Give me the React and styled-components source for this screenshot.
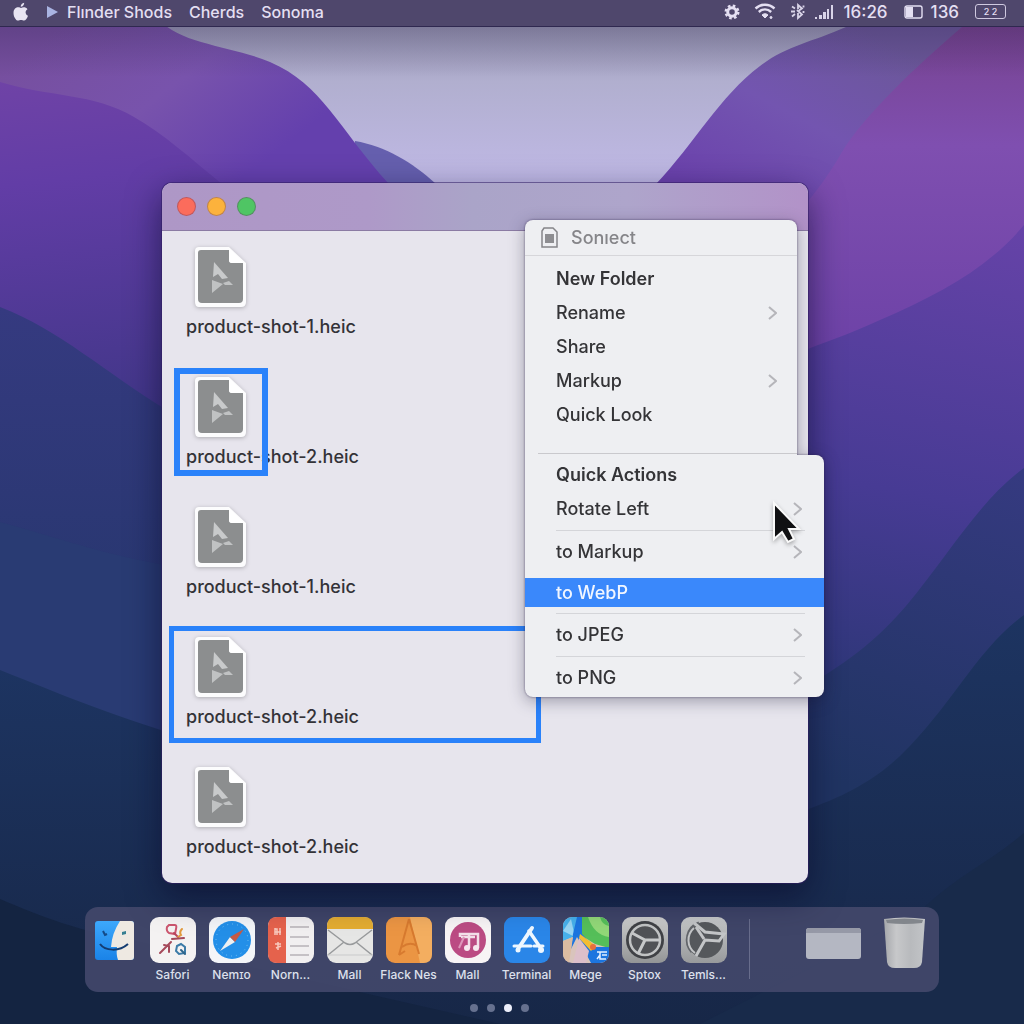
import React, { useState } from "react";
import styled, { createGlobalStyle } from "styled-components";

const GlobalStyle = createGlobalStyle`
  * {
    box-sizing: border-box;
  }

  body {
    margin: 0;
    font-family: Inter, "Liberation Sans", sans-serif;
    background: #14213f;
  }

  button {
    font-family: inherit;
    border: none;
    background: none;
    padding: 0;
    margin: 0;
  }
`;

const Desktop = styled.div`
  position: relative;
  min-height: 100vh;
  display: flex;
  flex-direction: column;
  overflow: hidden;
  isolation: isolate;
`;

/* Wallpaper sits behind everything on the desktop */
const WallpaperArt = styled.svg`
  position: absolute;
  inset: 0;
  width: 100%;
  height: 100%;
  z-index: -1;
`;

const MenuBar = styled.header`
  display: flex;
  justify-content: space-between;
  align-items: center;
  height: 27px;
  padding: 0 18px 3px 12px;
  background: #4f476c;
  border-bottom: 1px solid #2f2850;
  color: #e4dff2;
`;

const MenuGroup = styled.nav`
  display: flex;
  align-items: center;
  gap: 17px;
`;

const StatusGroup = styled.div`
  display: flex;
  align-items: center;
  gap: 10px;
  font-size: 17px;
  font-weight: 500;
  line-height: 20px;
`;

const StatusIcons = styled.span`
  display: flex;
  align-items: center;
  gap: 14px;
`;

const BatteryStatus = styled.span`
  display: flex;
  align-items: center;
  gap: 8px;
  margin: 0 6px;
`;

const MenuButton = styled.button`
  display: flex;
  align-items: center;
  gap: 9px;
  color: inherit;
  font-size: 16px;
  font-weight: 500;
  line-height: 20px;
  white-space: nowrap;
`;

const InputBadge = styled.span`
  width: 31px;
  height: 15px;
  border: 1px solid #cfc9e0;
  border-radius: 3px;
  font-size: 9px;
  line-height: 13px;
  text-align: center;
`;

const Workspace = styled.main`
  flex: 1;
  padding: 156px 216px 24px 162px;
`;

const Window = styled.section`
  position: relative;
  border-radius: 10px;
  background: #e7e5ed;
  box-shadow: 0 0 0 1px rgba(50, 30, 100, 0.55), 0 12px 34px rgba(8, 8, 40, 0.6);
`;

const TitleBar = styled.div`
  display: flex;
  align-items: center;
  gap: 11px;
  height: 48px;
  padding: 0 15px;
  border-radius: 10px 10px 0 0;
  border-bottom: 1px solid #8b7ba3;
  background: linear-gradient(
    90deg,
    #ae97c6 0%,
    #ae99c8 32%,
    #aaa4c8 48%,
    #aea5cb 72%,
    #b292c8 100%
  );
`;

const TrafficLight = styled.button`
  width: 19px;
  height: 19px;
  border-radius: 50%;
  border: 1px solid rgba(90, 50, 90, 0.35);
  background: ${(props) => props.$color};
`;

const FileList = styled.ul`
  list-style: none;
  margin: 0;
  padding: 15px 0 0;
`;

const FileItem = styled.li`
  position: relative;
  height: 130px;
  padding: 0 24px;

  &:last-child {
    height: 117px;
  }
`;

const FileButton = styled.button`
  display: flex;
  flex-direction: column;
  align-items: flex-start;
  gap: 7px;
  color: #343338;
  font-size: 18px;
  font-weight: 500;
  line-height: 24px;

  svg {
    display: block;
    margin-left: 8px;
    filter: drop-shadow(0 1px 2px rgba(0, 0, 0, 0.25));
  }
`;

/* Drag-selection frame drawn over a file */
const Selection = styled.span`
  position: absolute;
  top: ${(props) => (props.$wide ? "-10px" : "-8px")};
  left: ${(props) => (props.$wide ? "7px" : "12px")};
  width: ${(props) => (props.$wide ? "372px" : "94px")};
  height: ${(props) => (props.$wide ? "117px" : "108px")};
  border: ${(props) => (props.$wide ? "5px" : "6px")} solid #2a82fa;
  pointer-events: none;
`;

const ContextMenu = styled.div`
  position: absolute;
  top: 37px;
  right: -16px;
  width: 299px;
  filter: drop-shadow(0 0 1px rgba(40, 30, 70, 0.6))
    drop-shadow(0 4px 8px rgba(20, 20, 50, 0.35));
`;

const MainPanel = styled.div`
  width: 272px;
  height: 235px;
  border-radius: 8px 8px 0 0;
  background: #eeeff2;
`;

const ActionsPanel = styled.div`
  padding: 3px 0 2px;
  border-radius: 0 8px 8px 8px;
  background: #eeeff2;
`;

const MenuHeader = styled.div`
  display: flex;
  align-items: center;
  gap: 13px;
  height: 36px;
  margin-bottom: 6px;
  padding: 0 16px;
  border-bottom: 1px solid #d6d6da;
  color: #858589;
  font-size: 18px;
  font-weight: 500;
`;

const Row = styled.button`
  display: flex;
  justify-content: space-between;
  align-items: center;
  width: 100%;
  height: ${(props) => (props.$active ? "29px" : "34px")};
  margin: ${(props) => (props.$active ? "9px 0 6px" : "0")};
  padding: 0 ${(props) => (props.$inset ? "22px" : "20px")} 0 31px;
  background: ${(props) => (props.$active ? "#3a88fb" : "transparent")};
  color: ${(props) => (props.$active ? "#f1f6ff" : "#343437")};
  font-size: 18px;
  font-weight: ${(props) => (props.$strong ? 600 : 500)};
  line-height: 24px;
  text-align: left;
`;

const Divider = styled.hr`
  height: 1px;
  margin: ${(props) => (props.$section ? "21px 0 0 13px" : "4px 19px 4px 31px")};
  border: none;
  background: ${(props) => (props.$section ? "#c9c9cd" : "#d4d5d9")};
`;

const Pointer = styled.svg`
  position: absolute;
  top: 279px;
  left: 245px;
  filter: drop-shadow(0 2px 2px rgba(0, 0, 0, 0.3));
`;

const DockArea = styled.footer`
  display: flex;
  flex-direction: column;
  align-items: center;
  gap: 12px;
  padding: 0 85px 12px;
`;

const Dock = styled.nav`
  display: flex;
  width: 100%;
  height: 85px;
  padding: 10px 14px 0 0;
  border-radius: 13px;
  background: rgba(68, 73, 108, 0.88);
`;

const DockItem = styled.button`
  display: flex;
  flex-direction: column;
  align-items: center;
  gap: 4px;
  flex: 0 0 59px;
  color: #dde0ec;
  font-size: 12px;
  font-weight: 500;
  line-height: 16px;
  white-space: nowrap;

  &:first-child {
    flex-basis: 58px;
  }

  svg {
    display: block;
    flex: none;
  }
`;

const DockSeparator = styled.span`
  width: 1px;
  height: 60px;
  margin: 2px auto 0 16px;
  background: #686d8c;
`;

const DockExtras = styled.div`
  display: flex;
  gap: 23px;
  align-items: flex-start;
`;

const PageDots = styled.div`
  display: flex;
  gap: 9px;
  padding-right: 26px;
`;

const Dot = styled.button`
  width: 8px;
  height: 8px;
  border-radius: 50%;
  background: ${(props) => (props.$current ? "#eceefa" : "#66718f")};
`;

const Wallpaper = () => (
  <WallpaperArt viewBox="0 0 1024 1024" preserveAspectRatio="none" aria-hidden="true">
    <defs>
      <linearGradient id="sky" x1="0" y1="0" x2="0" y2="1">
        <stop offset="0.02" stopColor="#9592b0" />
        <stop offset="0.08" stopColor="#b1afcf" />
        <stop offset="0.18" stopColor="#c0b9e6" />
      </linearGradient>
      <linearGradient id="backLeft" gradientUnits="userSpaceOnUse" x1="60" y1="27" x2="200" y2="210">
        <stop offset="0" stopColor="#764f9f" />
        <stop offset="0.5" stopColor="#7853ac" />
        <stop offset="1" stopColor="#6440ad" />
      </linearGradient>
      <linearGradient id="frontLeft" gradientUnits="userSpaceOnUse" x1="0" y1="80" x2="40" y2="430">
        <stop offset="0" stopColor="#6f43a6" />
        <stop offset="0.3" stopColor="#623da6" />
        <stop offset="1" stopColor="#403687" />
      </linearGradient>
      <linearGradient id="backRight" gradientUnits="userSpaceOnUse" x1="860" y1="27" x2="760" y2="220">
        <stop offset="0" stopColor="#6b5799" />
        <stop offset="0.5" stopColor="#7355b0" />
        <stop offset="1" stopColor="#6b42ac" />
      </linearGradient>
      <linearGradient id="magenta" x1="0" y1="0" x2="0" y2="1">
        <stop offset="0" stopColor="#774390" />
        <stop offset="0.25" stopColor="#7f4fb0" />
        <stop offset="1" stopColor="#6039a0" />
      </linearGradient>
      <linearGradient id="violet" gradientUnits="userSpaceOnUse" x1="1000" y1="220" x2="900" y2="780">
        <stop offset="0" stopColor="#6643a8" />
        <stop offset="0.5" stopColor="#473b94" />
        <stop offset="1" stopColor="#24356d" />
      </linearGradient>
      <linearGradient id="indigo" x1="0" y1="0" x2="0" y2="1">
        <stop offset="0" stopColor="#353a80" />
        <stop offset="1" stopColor="#24366b" />
      </linearGradient>
      <linearGradient id="indigoRight" gradientUnits="userSpaceOnUse" x1="1000" y1="470" x2="900" y2="800">
        <stop offset="0" stopColor="#353a80" />
        <stop offset="1" stopColor="#203462" />
      </linearGradient>
      <linearGradient id="navy" x1="0" y1="0" x2="0" y2="1">
        <stop offset="0" stopColor="#1d3461" />
        <stop offset="1" stopColor="#172747" />
      </linearGradient>
      <linearGradient id="shade" x1="0" y1="0" x2="0" y2="1">
        <stop offset="0" stopColor="#1a1638" stopOpacity="0.22" />
        <stop offset="1" stopColor="#1a1638" stopOpacity="0" />
      </linearGradient>
    </defs>
    <rect width="1024" height="1024" fill="url(#sky)" />
    <path d="M355 141C385 146 412 162 436 184V300H340Z" fill="#655fae" />
    <path d="M0 20H160C180 44 232 46 270 62C322 84 338 128 389 184V500H0Z" fill="url(#backLeft)" />
    <path d="M0 82C48 97 94 93 134 117C164 134 190 158 222 184L260 500H0Z" fill="url(#frontLeft)" />
    <path d="M0 307C60 330 104 372 170 412L600 700H0Z" fill="url(#indigo)" />
    <path d="M0 522C60 538 100 554 170 566V800H0Z" fill="#293b73" />
    <path d="M656 184C694 144 720 96 760 66C786 46 812 42 846 27H1024V500H656Z" fill="url(#backRight)" />
    <path d="M962 27C914 68 864 116 842 152C826 180 812 196 806 204L780 500H1024V27Z" fill="url(#magenta)" />
    <path d="M1024 225C988 268 940 294 880 320C850 334 820 344 800 352V1024H1024Z" fill="url(#violet)" />
    <path d="M1024 468C978 502 948 556 906 606C868 650 834 670 800 690V1024H1024Z" fill="url(#indigoRight)" />
    <path d="M1024 615C976 650 952 706 900 756C868 786 834 800 800 812L500 860V1024H1024Z" fill="url(#navy)" />
    <path d="M0 670C60 694 108 714 180 736L560 860V1024H0Z" fill="url(#navy)" />
    <path d="M0 899C40 916 80 932 140 942L500 1024H0Z" fill="#142441" />
    <path d="M1024 833C990 862 950 880 920 912L700 1024H1024Z" fill="#182a4a" />
    <rect y="27" width="1024" height="50" fill="url(#shade)" />
  </WallpaperArt>
);

const AppleIcon = () => (
  <svg width="18" height="20" viewBox="0 0 18 20" fill="#e8e4f2">
    <path d="M9 6C11 5 14 5 15.500 7.300C12.700 9 13.200 12.600 16 13.700C15 16.500 13.500 18.600 12 18.600C10.800 18.600 10.500 18 9 18C7.600 18 7.200 18.600 6 18.600C3.800 18.600 1.500 14.500 1.500 11C1.500 7 4 5.300 6.300 5.300C7.500 5.300 8.300 6 9 6Z" />
    <path d="M8.700 4.800C8.600 2.600 10.300 1 12.200.800C12.300 3 10.700 4.800 8.700 4.800Z" />
  </svg>
);

const PlayIcon = () => (
  <svg width="11" height="14" viewBox="0 0 11 14" fill="#a9b4e2">
    <path d="M0 1L11 7L0 13Z" />
  </svg>
);

const GearIcon = () => (
  <svg width="16" height="16" viewBox="0 0 16 16" fill="none" stroke="#e4dff2">
    <circle cx="8" cy="8" r="4.300" strokeWidth="3" />
    <circle cx="8" cy="8" r="6.300" strokeWidth="2.400" strokeDasharray="2.600 2.350" />
  </svg>
);

const WifiIcon = () => (
  <svg width="22" height="17" viewBox="0 0 22 17" fill="none" stroke="#e4dff2" strokeWidth="2.400">
    <path d="M1.500 5.500C7 .500 15 .500 20.500 5.500" />
    <path d="M4.800 9C8.500 5.700 13.500 5.700 17.200 9" />
    <path d="M8 12C10 10.300 12 10.300 14 12L11 15Z" fill="#e4dff2" strokeWidth="1" />
    <circle cx="17" cy="14.500" r="1" fill="#e4dff2" strokeWidth="1" />
  </svg>
);

const BluetoothIcon = () => (
  <svg width="15" height="17" viewBox="0 0 15 17" fill="none" stroke="#d9d4e8" strokeWidth="1.800">
    <path d="M2 3.500L5 5.500M7 7L12 11.500L8 15V10M8 6V2L12 5.500L9 7.500M5 11L2 13.500M1 8.500H5" />
    <path d="M13.500 2.500V4.500M13.500 8V10" />
  </svg>
);

const SignalIcon = () => (
  <svg width="18" height="16" viewBox="0 0 18 16" fill="#d9d4e8">
    <rect x="0" y="13" width="2" height="2" />
    <rect x="4" y="11" width="3" height="4" />
    <rect x="8" y="8" width="3" height="7" />
    <rect x="12" y="5" width="2" height="10" />
    <rect x="16" y="1" width="2" height="14" />
  </svg>
);

const BatteryIcon = () => (
  <svg width="19" height="14" viewBox="0 0 19 14">
    <rect x="1" y="1" width="17" height="12" rx="2" fill="none" stroke="#e4dff2" strokeWidth="1.400" />
    <rect x="2" y="2" width="7" height="10" fill="#e4dff2" />
  </svg>
);

const FileIcon = () => (
  <svg width="53" height="62" viewBox="0 0 53 62">
    <path d="M5 1H35L52 17V56Q52 61 47 61H5Q1 61 1 56V5Q1 1 5 1Z" fill="#fcfcfd" />
    <path d="M7 4H35V14Q35 17 38 17H49V53Q49 57 45 57H8Q4 57 4 53V7Q4 4 7 4Z" fill="#8c8e8f" />
    <path d="M35 2L50 17H38Q35 17 35 14Z" fill="#fff" />
    <path d="M20 16L34 32L28 33L24 28L19 31Z" fill="#c8cacb" />
    <path d="M18 34L29 38L18 47ZM29 37L35 35L39 39L31 39Z" fill="#c0c2c3" />
  </svg>
);

const DocIcon = () => (
  <svg width="17" height="21" viewBox="0 0 17 21" fill="none" stroke="#858589" strokeWidth="1.500">
    <path d="M3 1H12L16 5V20H1V4Z" />
    <path d="M4 7H13V16H4Z" fill="#8d8d91" stroke="none" />
  </svg>
);

const Chevron = () => (
  <svg width="9" height="14" viewBox="0 0 9 14" fill="none" stroke="#b5b5ba" strokeWidth="2">
    <path d="M1 1L8 7L1 13" />
  </svg>
);

const FinderIcon = () => (
  <svg width="46" height="46" viewBox="0 0 46 46">
    <defs>
      <linearGradient id="finderBlue" x1="0" y1="0" x2="0" y2="1">
        <stop offset="0" stopColor="#3da8fb" />
        <stop offset="1" stopColor="#1a83e8" />
      </linearGradient>
    </defs>
    <rect x="4" y="4" width="39" height="39" rx="3" fill="url(#finderBlue)" />
    <path d="M29 4H40Q43 4 43 7V40Q43 43 40 43H27Q25 38 26 30H20Q21 16 29 4Z" fill="#eee9e2" />
    <path d="M12 14L14 18L16 17" fill="none" stroke="#144a88" strokeWidth="2" />
    <path d="M31 15L35 14V17L31 18Z" fill="#357e91" />
    <path d="M9 27C14 34 28 35 37 27" fill="none" stroke="#143c70" strokeWidth="2" />
  </svg>
);

const Tile = ({ fill, children }) => (
  <svg width="46" height="46" viewBox="0 0 46 46">
    <rect width="46" height="46" rx="9" fill={fill} />
    {children}
  </svg>
);

const SketchIcon = () => (
  <Tile fill="#f4f2f2">
    <g fill="none" strokeWidth="2" strokeLinecap="round">
      <path d="M19 8H25Q27 8 26 12L25 17L19 16Q16 14 17 10Z" stroke="#cc566f" />
      <path d="M24 16L28 20" stroke="#b9475e" />
      <path d="M32 12Q29 15 31 18L28 20" stroke="#e29a3d" />
      <path d="M10 36L21 25M14 28L19 29V35M22 22L34 21" stroke="#a5495b" />
      <path d="M27 29L31 27L35 30V36L29 37L26 34Z" stroke="#3b7ba8" />
      <path d="M31 33L35 37" stroke="#2e658b" />
    </g>
  </Tile>
);

const CompassIcon = () => (
  <Tile fill="#f3f5f8">
    <circle cx="23" cy="23" r="19" fill="#238fe8" />
    <circle cx="23" cy="23" r="16" fill="none" stroke="#75c2f5" strokeDasharray="1 4" />
    <path d="M11 34L21 20L26 25Z" fill="#edf0f2" />
    <path d="M35 12L21 20L26 25Z" fill="#c65a45" />
  </Tile>
);

const NotesIcon = () => (
  <Tile fill="#f1eff0">
    <path d="M9 0H18V46H9Q0 46 0 37V9Q0 0 9 0Z" fill="#e5624c" />
    <path d="M7 18V11M7 12H9V18M12 11V18M7 15H13M10 25V33M7 27H13M8 31L13 29" fill="none" stroke="#f8c9bd" strokeWidth="1.500" />
    <path d="M22 10H41M22 20H41M22 29H41M22 38H41" stroke="#b6b3b6" strokeWidth="1.500" />
  </Tile>
);

const MailIcon = () => (
  <Tile fill="#e6e6e5">
    <path d="M9 0H37Q46 0 46 9V12H0V9Q0 0 9 0Z" fill="#e3ac32" />
    <path d="M1 13L18 26Q23 29 28 26L45 13M1 38L17 25M45 38L29 25" fill="none" stroke="#989a9c" strokeWidth="1.500" />
    <path d="M0 38H46" stroke="#c9cacb" />
  </Tile>
);

const PagesIcon = () => (
  <Tile fill="#eb9543">
    <path d="M24 0H37Q46 0 46 9V37Q46 46 37 46H34Z" fill="#f3ae60" />
    <path d="M23 2L13 38M23 2L33 37M16 30Q24 24 31 29M13 38L19 34" fill="none" stroke="#d77a2f" strokeWidth="2" />
  </Tile>
);

const MusicIcon = () => (
  <Tile fill="#f7f4f5">
    <circle cx="23" cy="23" r="18" fill="#bb4b83" />
    <path d="M15 20V17H33V31M24 18V31M16 20H30" fill="none" stroke="#f3dfe9" strokeWidth="2.500" />
    <path d="M14 31L19 20" stroke="#dd97ba" strokeWidth="2" />
    <circle cx="22" cy="31" r="3" fill="#f7e8ef" />
    <circle cx="31" cy="31" r="3" fill="#f7e8ef" />
  </Tile>
);

const StoreIcon = () => (
  <Tile fill="#2a86e8">
    <g fill="none" stroke="#eef7ff" strokeLinecap="round">
      <path d="M28 11L14 32" strokeWidth="4" />
      <path d="M25 14L38 33" strokeWidth="3.500" />
      <path d="M10 29H27M30 29H39" strokeWidth="3" />
    </g>
    <circle cx="14" cy="33" r="2.500" fill="#eef7ff" />
    <circle cx="37" cy="33" r="3" fill="#eef7ff" />
  </Tile>
);

const MapsIcon = () => (
  <svg width="46" height="46" viewBox="0 0 46 46">
    <defs>
      <clipPath id="mapsClip">
        <rect width="46" height="46" rx="9" />
      </clipPath>
    </defs>
    <g clipPath="url(#mapsClip)">
      <rect width="46" height="46" fill="#d9c4bc" />
      <path d="M18 0H46V31L32 27L16 17Z" fill="#55bf59" />
      <path d="M25 0Q31 18 46 20V9Q39 8 37 0Z" fill="#92d878" />
      <path d="M0 0H15V18L0 24Z" fill="#47b1eb" />
      <path d="M0 14L8 2L12 20Z" fill="#98d5f3" />
      <path d="M14 0H19V17L31 30H46V46H28L14 20L8 32L10 17Z" fill="#1c75df" />
      <path d="M17 17L33 29L28 34L16 21Z" fill="#f2bd34" />
      <circle cx="30" cy="30" r="3" fill="#e96f3d" />
      <path d="M0 24L10 20L6 46H0Z" fill="#dbbca1" />
      <path d="M16 21L26 34L23 46H10Z" fill="#dcbfca" />
      <path d="M34 35H44M37 35V42H43M39 38H44M34 42L37 38" stroke="#e2efff" strokeWidth="1.500" fill="none" />
    </g>
  </svg>
);

const WheelIcon = () => (
  <Tile fill="url(#wheelTile)">
    <defs>
      <linearGradient id="wheelTile" x1="0" y1="0" x2="0" y2="1">
        <stop offset="0" stopColor="#cccdcd" />
        <stop offset="1" stopColor="#939596" />
      </linearGradient>
    </defs>
    <circle cx="23" cy="23" r="19" fill="#3f4145" />
    <circle cx="23" cy="23" r="15" fill="#505256" stroke="#c1c3c4" strokeWidth="2.500" />
    <path d="M23 23L10 16M23 23H38M23 23L16 37" fill="none" stroke="#c6c8c9" strokeWidth="3" />
  </Tile>
);

const BrokenWheelIcon = () => (
  <Tile fill="url(#brokenTile)">
    <defs>
      <linearGradient id="brokenTile" x1="0" y1="0" x2="0" y2="1">
        <stop offset="0" stopColor="#c6c8c9" />
        <stop offset="1" stopColor="#989a9c" />
      </linearGradient>
    </defs>
    <circle cx="24" cy="23" r="18" fill="#55585c" />
    <path d="M18 6A18 18 0 0 0 11 35" fill="none" stroke="#62656a" strokeWidth="3" />
    <g fill="none" stroke="#c3c5c7">
      <path d="M13 6L24 15L43 17L38 24L24 23L15 39" strokeWidth="3" />
      <path d="M15 10L23 22" strokeWidth="3" />
      <path d="M13 11A16 16 0 0 0 14 36" strokeWidth="2" />
    </g>
  </Tile>
);

const MinimizedIcon = () => (
  <svg width="55" height="54" viewBox="0 0 55 54">
    <rect y="11" width="55" height="31" rx="3" fill="#b4b7c2" />
    <path d="M3 11H52Q55 11 55 14V16H0V14Q0 11 3 11Z" fill="#9699a7" />
  </svg>
);

const TrashIcon = () => (
  <svg width="41" height="54" viewBox="0 0 41 54">
    <defs>
      <linearGradient id="trashBody">
        <stop offset="0" stopColor="#a5a7ab" />
        <stop offset="0.3" stopColor="#c7c8ca" />
        <stop offset="0.65" stopColor="#b8babd" />
        <stop offset="1" stopColor="#c2c4c7" />
      </linearGradient>
    </defs>
    <path d="M0 2Q20 -1 41 2L38 45Q37 51 30 51H11Q4 51 3 45Z" fill="url(#trashBody)" />
    <path d="M2 3Q20 0 39 3L38 6Q20 8 3 6Z" fill="#82868c" />
  </svg>
);

const files = [
  { name: "product-shot-1.heic" },
  { name: "product-shot-2.heic", selection: "narrow" },
  { name: "product-shot-1.heic" },
  { name: "product-shot-2.heic", selection: "wide" },
  { name: "product-shot-2.heic" },
];

const mainRows = [
  { label: "New Folder", strong: true },
  { label: "Rename", arrow: true },
  { label: "Share" },
  { label: "Markup", arrow: true },
  { label: "Quick Look" },
];

const actionRows = [
  { label: "Quick Actions", strong: true },
  { label: "Rotate Left", arrow: true, divider: true },
  { label: "to Markup", arrow: true },
  { label: "to WebP", divider: true },
  { label: "to JPEG", arrow: true, divider: true },
  { label: "to PNG", arrow: true },
];

const dockApps = [
  { label: "", name: "Finder", icon: <FinderIcon /> },
  { label: "Safori", icon: <SketchIcon /> },
  { label: "Nemɪo", icon: <CompassIcon /> },
  { label: "Norn...", icon: <NotesIcon /> },
  { label: "Mall", icon: <MailIcon /> },
  { label: "Flack Nes", icon: <PagesIcon /> },
  { label: "Mall", icon: <MusicIcon /> },
  { label: "Terminal", icon: <StoreIcon /> },
  { label: "Mege", icon: <MapsIcon /> },
  { label: "Sptox", icon: <WheelIcon /> },
  { label: "Temls...", icon: <BrokenWheelIcon /> },
];

const App = () => {
  const [active, setActive] = useState("to WebP");
  const [page, setPage] = useState(2);

  return (
    <Desktop>
      <GlobalStyle />
      <Wallpaper />
      <MenuBar>
        <MenuGroup aria-label="Menu bar">
          <MenuButton aria-label="Apple menu">
            <AppleIcon />
          </MenuButton>
          <MenuButton>
            <PlayIcon />
            Flınder Shods
          </MenuButton>
          <MenuButton>Cherds</MenuButton>
          <MenuButton>Sonoma</MenuButton>
        </MenuGroup>
        <StatusGroup>
          <StatusIcons>
            <GearIcon />
            <WifiIcon />
            <BluetoothIcon />
          </StatusIcons>
          <SignalIcon />
          <span>16:26</span>
          <BatteryStatus>
            <BatteryIcon />
            136
          </BatteryStatus>
          <InputBadge>2 2</InputBadge>
        </StatusGroup>
      </MenuBar>

      <Workspace>
        <Window>
          <TitleBar>
            <TrafficLight $color="#fb6c5c" aria-label="Close" />
            <TrafficLight $color="#fcb23c" aria-label="Minimize" />
            <TrafficLight $color="#4fc564" aria-label="Zoom" />
          </TitleBar>
          <FileList>
            {files.map((file, index) => (
              <FileItem key={index}>
                <FileButton>
                  <FileIcon />
                  {file.name}
                </FileButton>
                {file.selection && <Selection $wide={file.selection === "wide"} />}
              </FileItem>
            ))}
          </FileList>

          <ContextMenu>
            <MainPanel>
              <MenuHeader>
                <DocIcon />
                Sonıect
              </MenuHeader>
              {mainRows.map((row) => (
                <Row key={row.label} $strong={row.strong}>
                  {row.label}
                  {row.arrow && <Chevron />}
                </Row>
              ))}
              <Divider $section />
            </MainPanel>
            <ActionsPanel>
              {actionRows.map((row) => (
                <React.Fragment key={row.label}>
                  <Row
                    $inset
                    $strong={row.strong}
                    $active={active === row.label}
                    onClick={() => setActive(row.label)}
                  >
                    {row.label}
                    {row.arrow && <Chevron />}
                  </Row>
                  {row.divider && <Divider />}
                </React.Fragment>
              ))}
            </ActionsPanel>
            <Pointer width="32" height="48" viewBox="0 0 32 48">
              <path
                d="M4 4V40L12 33L18 43L24 40L19 30H29Z"
                fill="#111113"
                stroke="#fafafa"
                strokeWidth="2"
              />
            </Pointer>
          </ContextMenu>
        </Window>
      </Workspace>

      <DockArea>
        <Dock aria-label="Dock">
          {dockApps.map((app, index) => (
            <DockItem key={index} aria-label={app.label || app.name}>
              {app.icon}
              {app.label}
            </DockItem>
          ))}
          <DockSeparator />
          <DockExtras>
            <button aria-label="Minimized window">
              <MinimizedIcon />
            </button>
            <button aria-label="Trash">
              <TrashIcon />
            </button>
          </DockExtras>
        </Dock>
        <PageDots>
          {[0, 1, 2, 3].map((n) => (
            <Dot
              key={n}
              $current={n === page}
              aria-label={`Page ${n + 1}`}
              onClick={() => setPage(n)}
            />
          ))}
        </PageDots>
      </DockArea>
    </Desktop>
  );
};

export default App;
